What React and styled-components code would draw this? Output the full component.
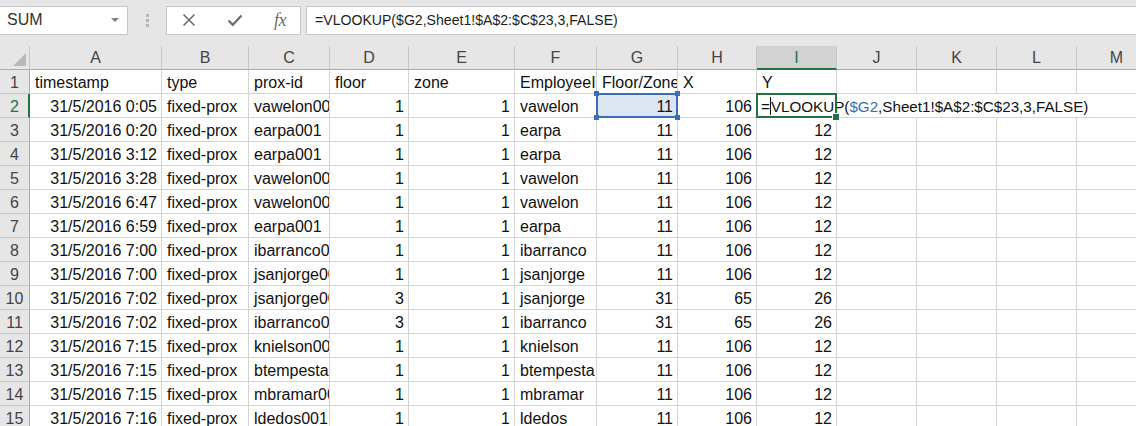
import React from 'react'
import styled, { createGlobalStyle } from 'styled-components'

const GlobalStyle = createGlobalStyle`
  html, body {
    margin: 0;
    padding: 0;
    background: #ffffff;
    overflow: hidden;
  }
  body {
    font-family: "Liberation Sans", Arial, sans-serif;
  }
`

const COLS = [
  { key: 'A', w: 132 },
  { key: 'B', w: 87 },
  { key: 'C', w: 81 },
  { key: 'D', w: 79 },
  { key: 'E', w: 106 },
  { key: 'F', w: 82 },
  { key: 'G', w: 81 },
  { key: 'H', w: 79 },
  { key: 'I', w: 80 },
  { key: 'J', w: 80 },
  { key: 'K', w: 80 },
  { key: 'L', w: 80 },
  { key: 'M', w: 80 },
]

const FORMULA = '=VLOOKUP($G2,Sheet1!$A$2:$C$23,3,FALSE)'

// timestamp, prox-id, floor, employee, floor/zone, x, y
const DATA = [
  ['0:05', 'vawelon001', 1, 'vawelon', 11, 106, null],
  ['0:20', 'earpa001', 1, 'earpa', 11, 106, 12],
  ['3:12', 'earpa001', 1, 'earpa', 11, 106, 12],
  ['3:28', 'vawelon001', 1, 'vawelon', 11, 106, 12],
  ['6:47', 'vawelon001', 1, 'vawelon', 11, 106, 12],
  ['6:59', 'earpa001', 1, 'earpa', 11, 106, 12],
  ['7:00', 'ibarranco001', 1, 'ibarranco', 11, 106, 12],
  ['7:00', 'jsanjorge001', 1, 'jsanjorge', 11, 106, 12],
  ['7:02', 'jsanjorge001', 3, 'jsanjorge', 31, 65, 26],
  ['7:02', 'ibarranco001', 3, 'ibarranco', 31, 65, 26],
  ['7:15', 'knielson001', 1, 'knielson', 11, 106, 12],
  ['7:15', 'btempesta001', 1, 'btempesta', 11, 106, 12],
  ['7:15', 'mbramar001', 1, 'mbramar', 11, 106, 12],
  ['7:16', 'ldedos001', 1, 'ldedos', 11, 106, 12],
]

export default function App() {
  return (
    <Page>
      <GlobalStyle />
      <Toolbar>
        <NameBox>
          <span>SUM</span>
          <DropArrow />
        </NameBox>
        <Grip>
          <i /><i /><i />
        </Grip>
        <FxButtons>
          <IconButton>
            <svg width="14" height="14" viewBox="0 0 14 14">
              <path d="M1.5 1.5 L12.5 12.5 M12.5 1.5 L1.5 12.5" stroke="#6e6e6e" strokeWidth="1.6" fill="none" />
            </svg>
          </IconButton>
          <IconButton>
            <svg width="16" height="14" viewBox="0 0 16 14">
              <path d="M1.5 7.5 L5.8 11.8 L14.5 2.5" stroke="#6e6e6e" strokeWidth="2.2" fill="none" strokeLinejoin="miter" />
            </svg>
          </IconButton>
          <IconButton>
            <FxLabel>fx</FxLabel>
          </IconButton>
        </FxButtons>
        <FormulaInput>{FORMULA}</FormulaInput>
      </Toolbar>

      <Sheet>
        <Corner>
          <CornerTriangle />
        </Corner>
        {COLS.map((c) => (
          <ColHead key={c.key} $active={c.key === 'I'}>{c.key}</ColHead>
        ))}

        <RowHead>1</RowHead>
        <Cell>timestamp</Cell>
        <Cell>type</Cell>
        <Cell>prox-id</Cell>
        <Cell>floor</Cell>
        <Cell>zone</Cell>
        <Cell>EmployeeID</Cell>
        <Cell>Floor/Zone</Cell>
        <Cell>X</Cell>
        <Cell>Y</Cell>
        <Cell />
        <Cell />
        <Cell />
        <Cell />

        {DATA.map((r, i) => {
          const n = i + 2
          const editing = n === 2
          return (
            <React.Fragment key={n}>
              <RowHead $active={editing}>{n}</RowHead>
              <Cell $num>{`31/5/2016 ${r[0]}`}</Cell>
              <Cell>fixed-prox</Cell>
              <Cell>{r[1]}</Cell>
              <Cell $num>{r[2]}</Cell>
              <Cell $num>1</Cell>
              <Cell>{r[3]}</Cell>
              {editing ? (
                <RangeCell $num>
                  {r[4]}
                  <RangeBox>
                    <Handle $pos="tl" />
                    <Handle $pos="tr" />
                    <Handle $pos="bl" />
                    <Handle $pos="br" />
                  </RangeBox>
                </RangeCell>
              ) : (
                <Cell $num>{r[4]}</Cell>
              )}
              <Cell $num>{r[5]}</Cell>
              {editing ? (
                <EditCell>
                  <EditText>
                    =<Caret />VLOOKUP(<RefText>$G2</RefText>,Sheet1!$A$2:$C$23,3,FALSE)
                  </EditText>
                  <ActiveBorder>
                    <FillHandle />
                  </ActiveBorder>
                </EditCell>
              ) : (
                <Cell $num>{r[6]}</Cell>
              )}
              <Cell $hidden={editing} />
              <Cell $hidden={editing} />
              <Cell />
              <Cell />
            </React.Fragment>
          )
        })}
      </Sheet>
    </Page>
  )
}

const Page = styled.div`
  width: 1136px;
  height: 426px;
  overflow: hidden;
  background: #ffffff;
`

const Toolbar = styled.div`
  display: flex;
  align-items: center;
  height: 46px;
  padding: 0 0 6px 0;
  box-sizing: border-box;
  background: #e6e6e6;
`

const NameBox = styled.div`
  display: flex;
  align-items: center;
  justify-content: space-between;
  width: 128px;
  height: 29px;
  box-sizing: border-box;
  padding: 0 8px 0 7px;
  background: #ffffff;
  border: 1px solid #c6c6c6;
  border-left: none;
  font-size: 16px;
  color: #333333;
`

const DropArrow = styled.span`
  width: 0;
  height: 0;
  border-left: 4px solid transparent;
  border-right: 4px solid transparent;
  border-top: 4px solid #808080;
`

const Grip = styled.div`
  display: flex;
  flex-direction: column;
  gap: 2px;
  margin: 0 17px 0 18px;
  i {
    display: block;
    width: 3px;
    height: 3px;
    background: #b4b4b4;
  }
`

const FxButtons = styled.div`
  display: flex;
  align-items: center;
  justify-content: space-between;
  width: 135px;
  height: 29px;
  box-sizing: border-box;
  padding: 0 12px 0 14px;
  background: #ffffff;
  border: 1px solid #c6c6c6;
`

const IconButton = styled.div`
  display: flex;
  align-items: center;
  justify-content: center;
  width: 16px;
  height: 20px;
`

const FxLabel = styled.span`
  font-family: "Liberation Serif", "Times New Roman", serif;
  font-style: italic;
  font-size: 18px;
  color: #6e6e6e;
  letter-spacing: -0.5px;
`

const FormulaInput = styled.div`
  flex: 1;
  height: 29px;
  margin-left: 5px;
  box-sizing: border-box;
  padding: 0 0 0 8px;
  display: flex;
  align-items: center;
  background: #ffffff;
  border: 1px solid #c6c6c6;
  border-right: none;
  font-size: 14.1px;
  color: #1e1e1e;
  white-space: nowrap;
`

const Sheet = styled.div`
  display: grid;
  grid-template-columns: 30px ${COLS.map((c) => `${c.w}px`).join(' ')};
  grid-auto-rows: 24px;
  width: max-content;
`

const HeadBase = styled.div`
  display: flex;
  align-items: center;
  justify-content: center;
  box-sizing: border-box;
  background: #e6e6e6;
  color: #444444;
  font-size: 16px;
`

const Corner = styled(HeadBase)`
  position: relative;
  border-right: 1px solid #c8c8c8;
  border-bottom: 1px solid #ababab;
`

const CornerTriangle = styled.span`
  position: absolute;
  right: 3px;
  bottom: 3px;
  width: 0;
  height: 0;
  border-left: 13px solid transparent;
  border-bottom: 13px solid #b9b9b9;
`

const ColHead = styled(HeadBase)`
  background: ${(p) => (p.$active ? '#d2d2d2' : '#e6e6e6')};
  color: ${(p) => (p.$active ? '#217346' : '#444444')};
  border-right: 1px solid #c8c8c8;
  border-bottom: ${(p) => (p.$active ? '2px solid #217346' : '1px solid #ababab')};
  padding-top: ${(p) => (p.$active ? '1px' : '0')};
`

const RowHead = styled(HeadBase)`
  padding-top: 2px;
  color: ${(p) => (p.$active ? '#217346' : '#444444')};
  border-right: ${(p) => (p.$active ? '2px solid #217346' : '1px solid #ababab')};
  border-bottom: 1px solid #c8c8c8;
  padding-left: ${(p) => (p.$active ? '1px' : '0')};
`

const Cell = styled.div`
  box-sizing: border-box;
  padding: 3px 4px 0 5px;
  border-right: 1px solid ${(p) => (p.$hidden ? '#ffffff' : '#d4d4d4')};
  border-bottom: 1px solid #d4d4d4;
  font-size: 16px;
  line-height: 20px;
  color: #111111;
  white-space: nowrap;
  overflow: hidden;
  text-align: ${(p) => (p.$num ? 'right' : 'left')};
`

const RangeCell = styled(Cell)`
  position: relative;
  overflow: visible;
  background: #dce6f2;
`

const RangeBox = styled.div`
  position: absolute;
  left: -1px;
  top: -1px;
  right: -1px;
  bottom: -1px;
  border: 2px solid #3d6eb4;
  pointer-events: none;
`

const Handle = styled.span`
  position: absolute;
  width: 5px;
  height: 5px;
  background: #3d6eb4;
  ${(p) => (p.$pos[0] === 't' ? 'top: -4px;' : 'bottom: -4px;')}
  ${(p) => (p.$pos[1] === 'l' ? 'left: -4px;' : 'right: -4px;')}
`

const EditCell = styled.div`
  position: relative;
  box-sizing: border-box;
  border-bottom: 1px solid #d4d4d4;
  z-index: 2;
`

const EditText = styled.div`
  position: absolute;
  left: 0;
  top: 0;
  height: 23px;
  padding: 3px 6px 0 4px;
  box-sizing: border-box;
  background: #ffffff;
  font-size: 15.2px;
  line-height: 20px;
  color: #111111;
  white-space: nowrap;
`

const RefText = styled.span`
  color: #3d6eb4;
`

const Caret = styled.span`
  display: inline-block;
  width: 1px;
  height: 18px;
  margin: 0 0 -3px 0;
  background: #111111;
`

const ActiveBorder = styled.div`
  position: absolute;
  left: -1px;
  top: -1px;
  width: 81px;
  height: 25px;
  box-sizing: border-box;
  border: 2px solid #217346;
  pointer-events: none;
`

const FillHandle = styled.span`
  position: absolute;
  right: -5px;
  bottom: -5px;
  width: 6px;
  height: 6px;
  background: #217346;
  border: 1px solid #ffffff;
`
